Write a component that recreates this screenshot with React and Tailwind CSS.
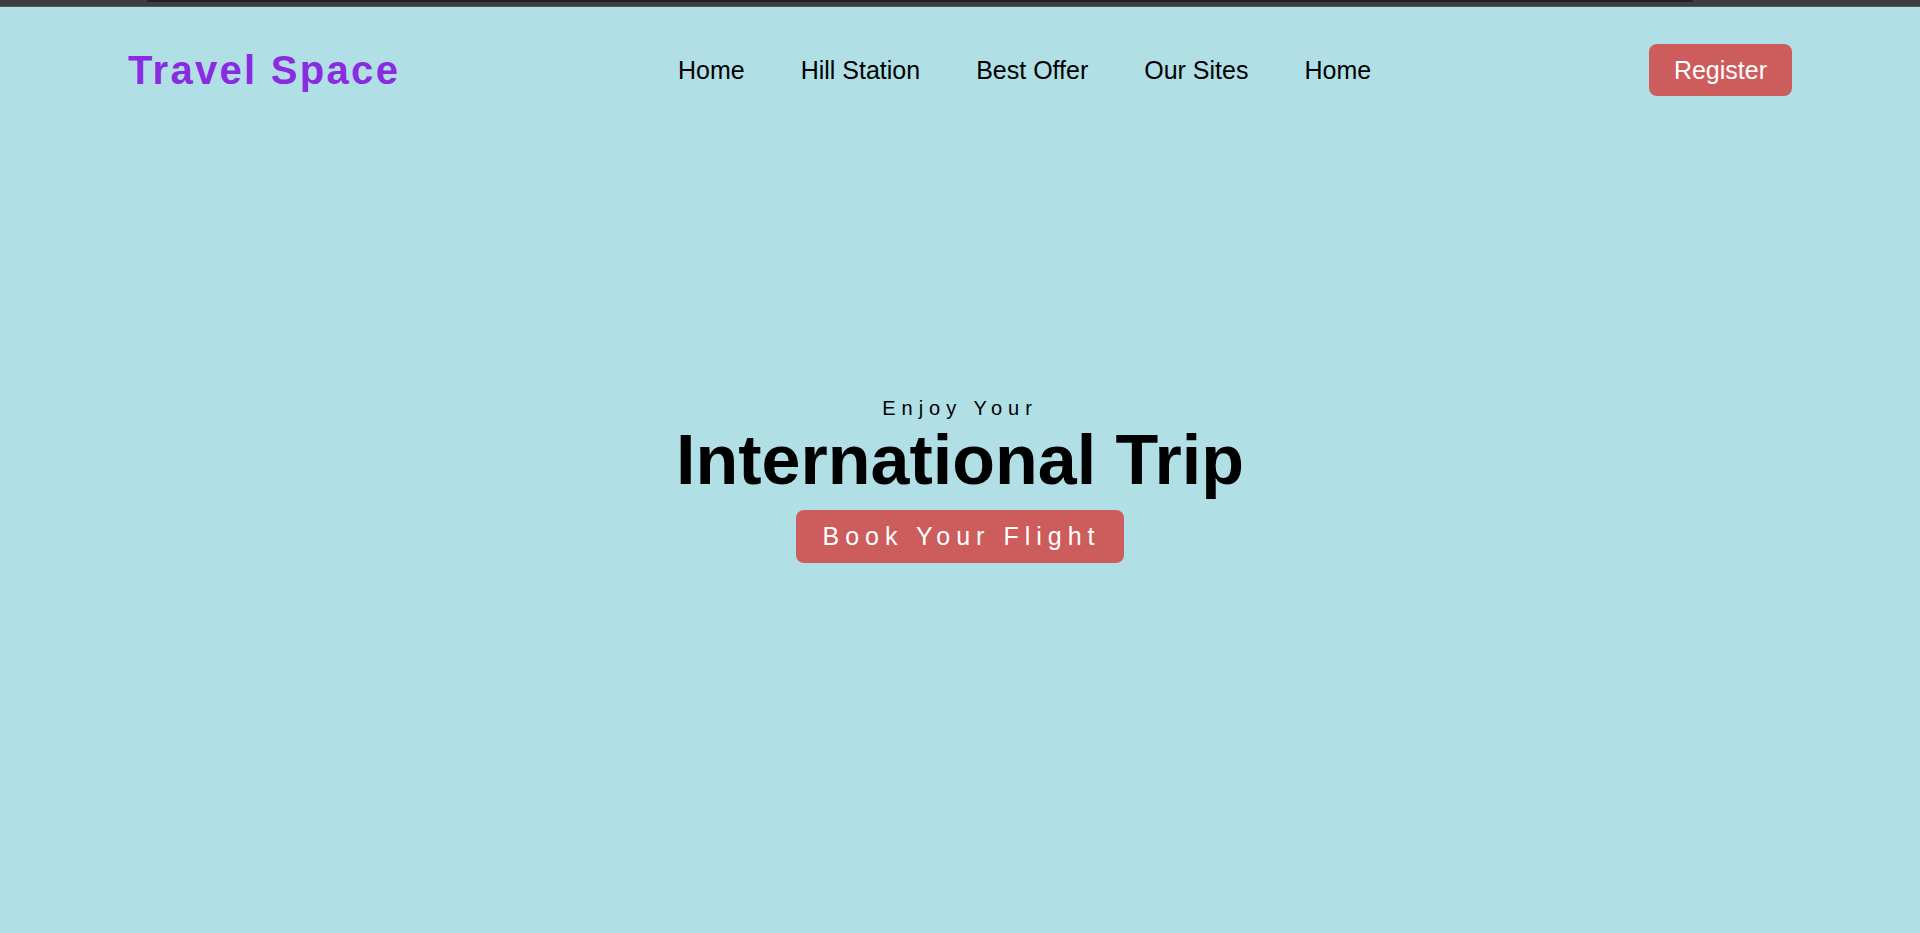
const navLinks = ['Home', 'Hill Station', 'Best Offer', 'Our Sites', 'Home'];

function TopStrip() {
    return (
        <div className="h-[7px] bg-[#3b3c3f] border-b border-[#55575b]">
            <div className="ml-[147px] mr-[227px] h-[2px] bg-[#202124] rounded-b-sm"></div>
        </div>
    );
}

function Header() {
    return (
        <header className="flex items-center justify-between px-[128px] pt-[37px]">
            {/* Logo */}
            <div className="text-[40px] font-bold tracking-[2.3px] text-[#8a2be2] leading-[46px]">
                Travel Space
            </div>

            {/* Nav links */}
            <nav className="flex items-center gap-[56px]">
                {navLinks.map((link, index) => (
                    <a key={index} href="#" className="text-[25px] text-black leading-[28px]">
                        {link}
                    </a>
                ))}
            </nav>

            <button className="bg-[#cd5c5c] text-white text-[25px] leading-[28px] px-[25px] py-[12px] rounded-[8px]">
                Register
            </button>
        </header>
    );
}

function Hero() {
    return (
        <section className="flex flex-col items-center pt-[301px] text-black">
            <p className="text-[20px] tracking-[6px] leading-[23px]">Enjoy Your</p>
            <h1 className="text-[70px] font-bold leading-[80px]">International Trip</h1>
            <button className="mt-[10px] bg-[#cd5c5c] text-white text-[25px] tracking-[6px] leading-[29px] pl-[26px] pr-[23px] py-[12px] rounded-[8px]">
                Book Your Flight
            </button>
        </section>
    );
}

export default function App() {
    return (
        <div className="min-h-screen bg-[#b0e0e6] font-['Liberation_Sans',Arial,sans-serif]">
            <TopStrip />
            <Header />
            <Hero />
        </div>
    );
}
